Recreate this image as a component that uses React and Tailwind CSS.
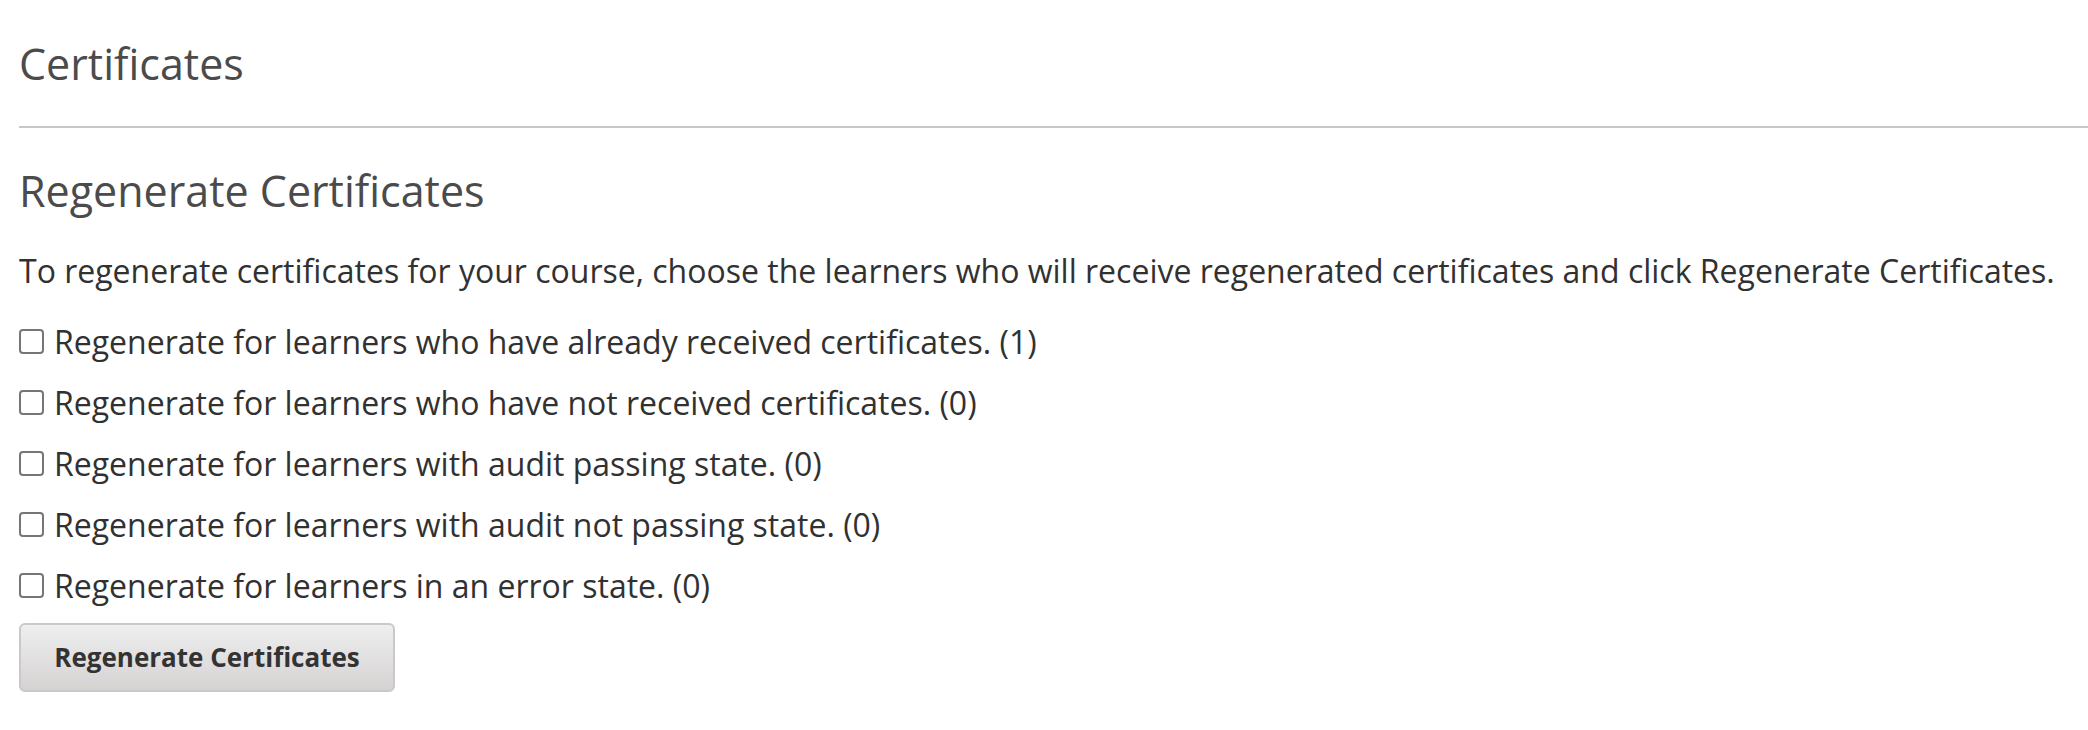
// App.jsx - certificates admin panel
const options = [
  { id: 'already', label: 'Regenerate for learners who have already received certificates. (1)' },
  { id: 'not_received', label: 'Regenerate for learners who have not received certificates. (0)' },
  { id: 'audit_passing', label: 'Regenerate for learners with audit passing state. (0)' },
  { id: 'audit_not_passing', label: 'Regenerate for learners with audit not passing state. (0)' },
  { id: 'error', label: 'Regenerate for learners in an error state. (0)' },
];

export default function App() {
  return (
    <div className="min-h-screen bg-white pl-[19px] font-['Open_Sans','Liberation_Sans',sans-serif]">
      <h2 className="pt-[35px] text-[43px] leading-[57px] font-normal text-[#4b4b4b]">Certificates</h2>
      <hr className="mt-[34px] border-0 border-t-2 border-[#c8c8c8]" />

      <section>
        <h3 className="mt-[34px] text-[43px] leading-[57px] font-normal text-[#4b4b4b]">Regenerate Certificates</h3>
        <p className="mt-[31px] text-[32px] leading-[41px] text-[#313131]">
          To regenerate certificates for your course, choose the learners who will receive regenerated certificates and click Regenerate Certificates.
        </p>

        <div className="mt-[30px] flex flex-col gap-[20px]">
          {options.map((opt) => (
            <label key={opt.id} className="flex items-center h-[41px] text-[32px] leading-[41px] text-[#313131]">
              <input
                type="checkbox"
                className="appearance-none w-[25px] h-[25px] shrink-0 rounded-[4px] border-2 border-[#767676] bg-white mr-[10px]"
              />
              {opt.label}
            </label>
          ))}
        </div>

        <button className="mt-[17px] h-[69px] w-[376px] rounded-[6px] border-2 border-[#cbc8c8] bg-gradient-to-b from-[#efefef] to-[#d5d2d2] text-[26px] font-bold text-[#333333]">
          Regenerate Certificates
        </button>
      </section>
    </div>
  );
}
